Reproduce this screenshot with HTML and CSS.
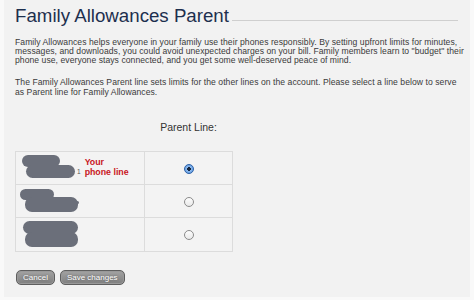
FILE: index.html
```html
<!DOCTYPE html>
<html lang="en">
<head>
<meta charset="utf-8">
<title>Family Allowances Parent</title>
<link rel="stylesheet" href="styles.css">
</head>
<body>
<div class="page">
  <div class="title-row">
    <h1 class="title">Family Allowances Parent</h1>
    <span class="title-rule"></span>
  </div>
  <p class="copy">Family Allowances helps everyone in your family use their phones responsibly. By setting upfront limits for minutes,<br>messages, and downloads, you could avoid unexpected charges on your bill. Family members learn to "budget" their<br>phone use, everyone stays connected, and you get some well-deserved peace of mind.</p>
  <p class="copy copy-second">The Family Allowances Parent line sets limits for the other lines on the account. Please select a line below to serve<br>as Parent line for Family Allowances.</p>

  <table class="lines">
    <thead>
      <tr><th class="head-blank"></th><th class="head-label">Parent Line:</th></tr>
    </thead>
    <tbody>
      <tr>
        <td class="line-cell">
          <div class="line-info">
            <svg class="blob" width="60" height="27" viewBox="0 0 60 27"><rect x="2" y="1" width="38" height="12" rx="6" fill="#6b6f7a"/><rect x="6" y="11" width="49" height="13" rx="6.5" fill="#6b6f7a"/></svg>
            <span class="digit">1</span>
            <span class="yours">Your<br>phone line</span>
          </div>
        </td>
        <td class="radio-cell"><span class="radio radio-on"></span></td>
      </tr>
      <tr>
        <td class="line-cell">
          <div class="line-info">
            <svg class="blob" width="60" height="27" viewBox="0 0 60 27"><rect x="0" y="2" width="34" height="11" rx="5.5" fill="#6b6f7a"/><rect x="5" y="10" width="53" height="15" rx="7" fill="#6b6f7a"/><rect x="56" y="14" width="3" height="3" rx="1.5" fill="#6b6f7a"/></svg>
          </div>
        </td>
        <td class="radio-cell"><span class="radio"></span></td>
      </tr>
      <tr>
        <td class="line-cell">
          <div class="line-info">
            <svg class="blob" width="60" height="27" viewBox="0 0 60 27"><rect x="3" y="0" width="55" height="13" rx="6.5" fill="#6b6f7a"/><rect x="5" y="11" width="53" height="15" rx="7" fill="#6b6f7a"/></svg>
          </div>
        </td>
        <td class="radio-cell"><span class="radio"></span></td>
      </tr>
    </tbody>
  </table>

  <div class="actions">
    <button class="btn" type="button">Cancel</button>
    <button class="btn" type="button">Save changes</button>
  </div>
</div>
</body>
</html>
```
FILE: styles.css
```css
html, body {
  margin: 0;
  padding: 0;
}
body {
  background: #f9f9f9;
  font-family: "Liberation Sans", Arial, Helvetica, sans-serif;
  color: #333;
}
.page {
  margin: 0 4px;
  height: 297px;
  background: #f2f2f2;
  padding: 5px 4px 0 11px;
  box-sizing: border-box;
}
.title-row {
  display: flex;
  align-items: stretch;
}
.title {
  margin: 0;
  font-size: 18.7px;
  line-height: 22px;
  font-weight: normal;
  color: #1d2f4e;
  white-space: nowrap;
}
.title-rule {
  flex: 1;
  margin: 0 8px 6px 3px;
  border-bottom: 1px solid #cfcfcf;
}
.copy {
  margin: 10.7px 0 0;
  font-size: 8.6px;
  letter-spacing: 0.05px;
  line-height: 9.2px;
  color: #3a3a3a;
  white-space: nowrap;
}
.copy-second {
  margin-top: 13.2px;
}
.lines {
  border-collapse: collapse;
  margin-top: 0;
}
.head-blank,
.head-label {
  padding: 24px 0 18px;
  font-weight: normal;
  font-size: 10.5px;
  line-height: 12px;
  color: #333;
  text-align: center;
}
.line-cell,
.radio-cell {
  border: 1px solid #dcdcdc;
  background: #f3f3f3;
  height: 33px;
  padding: 0;
  box-sizing: border-box;
}
.line-cell {
  width: 129px;
  padding-left: 4px;
}
.radio-cell {
  width: 88px;
  text-align: center;
}
tbody tr:last-child td {
  height: 34px;
}
.line-info {
  display: flex;
  align-items: center;
}
.blob {
  display: block;
  flex: none;
}
.digit {
  font-size: 6.5px;
  color: #555;
  margin: 8px 0 0 -3px;
}
.yours {
  margin-left: 4px;
  font-size: 8.8px;
  line-height: 9.5px;
  font-weight: bold;
  color: #c8161d;
}
.radio {
  display: inline-block;
  width: 10px;
  height: 10px;
  box-sizing: border-box;
  border-radius: 50%;
  border: 1px solid #8b8b8b;
  background: linear-gradient(#fdfdfd, #e9e9e9);
  vertical-align: middle;
  position: relative;
}
.radio-on {
  border-color: #2f63a8;
  background: radial-gradient(circle, #16243a 0 1.6px, #8fbbef 2px, #4a8bd8 100%);
}
.actions {
  display: flex;
  gap: 5px;
  margin: 18px 0 0 1px;
}
.btn {
  font-family: "Liberation Sans", Arial, Helvetica, sans-serif;
  font-size: 8px;
  line-height: 11px;
  height: 15px;
  padding: 0 6px;
  color: #fff;
  border: 1px solid #5e5e5e;
  border-radius: 5px;
  background: linear-gradient(#a3a3a3, #7f7f7f);
  box-shadow: inset 0 0 0 1px #999;
  text-shadow: 0 0 2px #555;
}
```
